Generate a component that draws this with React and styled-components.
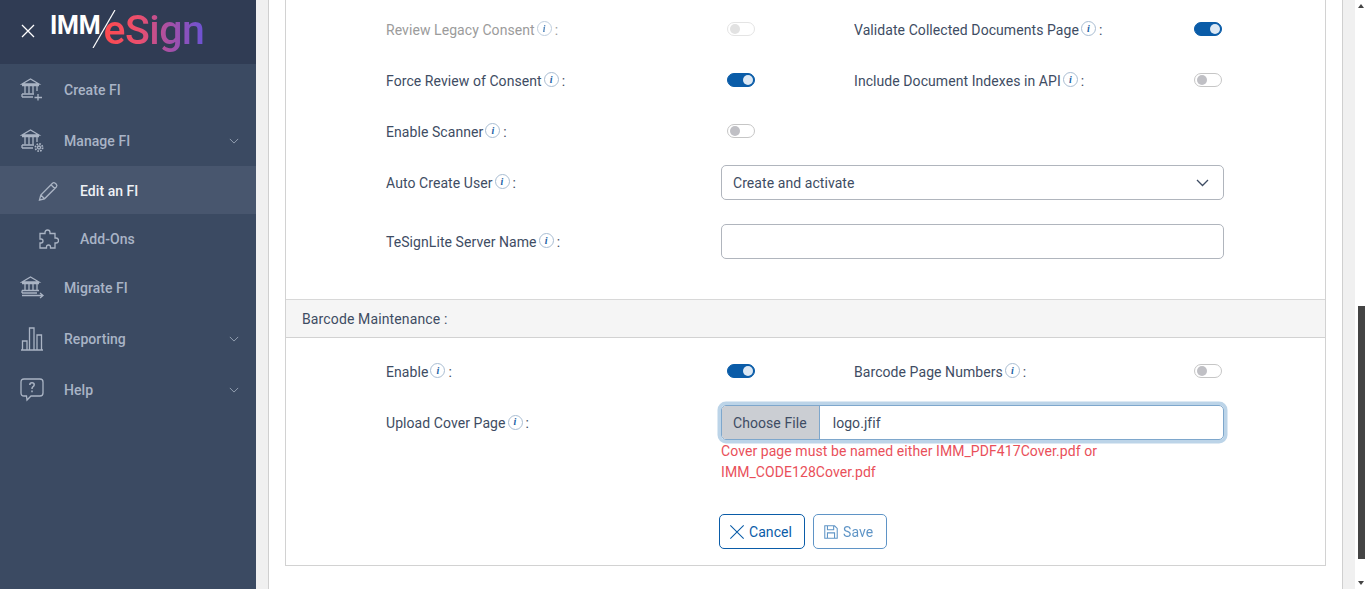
import React from "react";
import styled, { createGlobalStyle } from "styled-components";

const GlobalStyle = createGlobalStyle`
  html, body {
    margin: 0;
    padding: 0;
    overflow: hidden;
    background: #fff;
    font-family: "Roboto", "Liberation Sans", sans-serif;
  }
  * {
    box-sizing: border-box;
  }
`;

const Page = styled.div`
  display: flex;
  width: 1366px;
  height: 589px;
  overflow: hidden;
`;

/* sidebar */
const Sidebar = styled.aside`
  flex: 0 0 256px;
  background: #3b4a62;
`;

const SideHeader = styled.div`
  display: flex;
  height: 64px;
  padding-left: 21px;
  background: #303c54;
`;

const CloseBtn = styled.svg`
  width: 14px;
  height: 14px;
  margin: 24px 15px 0 0;
  stroke: #fff;
  stroke-width: 1.3;
`;

const Logo = styled.div`
  position: relative;
  display: flex;
  width: 160px;
  height: 64px;
`;

const LogoImm = styled.span`
  margin-top: 11px;
  font-family: "Roboto", sans-serif;
  font-size: 25px;
  line-height: 30px;
  font-weight: 700;
  letter-spacing: -0.2px;
  color: #fff;
`;

const LogoSlash = styled.svg`
  position: absolute;
  left: 42px;
  top: 10px;
  width: 24px;
  height: 38px;
  stroke: #fff;
  stroke-width: 1.2;
`;

const LogoSign = styled.span`
  margin: 5px 0 0 3px;
  height: 54px;
  font-family: "Roboto", sans-serif;
  font-size: 41px;
  line-height: 50px;
  font-weight: 500;
  letter-spacing: -0.5px;
  background: linear-gradient(90deg, #ff4a4e 0%, #ea4f6e 35%, #a650a6 65%, #6c53d4 100%);
  -webkit-background-clip: text;
  background-clip: text;
  color: transparent;
`;

const MenuItem = styled.div`
  display: flex;
  align-items: center;
  height: ${(p) => p.$h || 51}px;
  padding: ${(p) => (p.$sub ? "1px 0 0 37px" : "0 17px 0 20px")};
  background: ${(p) => (p.$active ? "#48566e" : "transparent")};
`;

const MenuIcon = styled.svg`
  flex: none;
  width: ${(p) => (p.$sub ? 22 : 26)}px;
  height: ${(p) => (p.$sub ? 22 : 26)}px;
  margin-right: ${(p) => (p.$sub ? 21 : 18)}px;
  fill: none;
  stroke: #aab4c4;
  stroke-width: 1.3;
`;

const MenuText = styled.span`
  flex: 1;
  font-size: 14px;
  font-weight: 500;
  letter-spacing: 0.05px;
  color: ${(p) => (p.$active ? "#eef1f5" : "#a9b4c6")};
`;

const Chevron = styled.svg`
  width: 10px;
  height: 6px;
  fill: none;
  stroke: #a3aebf;
  stroke-width: 1;
`;

/* main column */
const Gutter = styled.div`
  flex: 0 0 12px;
  background: #f0f0f0;
`;

const Content = styled.main`
  flex: 0 0 1075px;
  padding: 0 16px;
  background: #fff;
  border-left: 1px solid #cfcfcf;
  border-right: 1px solid #cfcfcf;
  letter-spacing: 0.07px;
`;

const Panel = styled.section`
  height: 566px;
  border: 1px solid #d2d2d2;
  border-top: 0;
`;

const FormBody = styled.div`
  padding: ${(p) => (p.$top ? "4px 0 40px 100px" : "8px 0 0 100px")};
`;

const ToggleRow = styled.div`
  display: grid;
  grid-template-columns: 335px 34px 99px 340px 28px;
  align-items: center;
  height: 51px;
`;

const FieldRow = styled.div`
  display: grid;
  grid-template-columns: 335px 503px;
  align-items: ${(p) => (p.$start ? "start" : "center")};
  margin-top: ${(p) => p.$mt || 0}px;
`;

const Label = styled.div`
  display: flex;
  align-items: center;
  padding-top: ${(p) => p.$pt || 0}px;
  font-size: 14px;
  line-height: 20px;
  color: ${(p) => (p.$disabled ? "#9b9b9b" : "#3e4c63")};
`;

const InfoDot = styled.span`
  display: inline-flex;
  align-items: center;
  justify-content: center;
  width: 15px;
  height: 15px;
  margin: -2px 3px 0 2px;
  border: 1px solid #a9bdd2;
  border-radius: 50%;
  font-family: "Liberation Serif", serif;
  font-style: italic;
  font-weight: 700;
  font-size: 10px;
  line-height: 1;
  color: #1c5fa5;
  opacity: ${(p) => (p.$disabled ? 0.75 : 1)};
`;

const Toggle = styled.span`
  display: flex;
  align-items: center;
  justify-content: ${(p) => (p.$on ? "flex-end" : "flex-start")};
  justify-self: end;
  width: 28px;
  height: 14px;
  margin-bottom: 2px;
  padding: 0 1.5px;
  border-radius: 7px;
  border: 1px solid ${(p) => (p.$on ? "#0a5ca8" : p.$disabled ? "#e4e4e4" : "#c6c6c6")};
  background: ${(p) => (p.$on ? "#0a5ca8" : "#fff")};

  &::after {
    content: "";
    width: 10px;
    height: 10px;
    border-radius: 50%;
    background: ${(p) => (p.$on ? "#dce8f4" : p.$disabled ? "#e2e2e2" : "#c0c0c5")};
  }
`;

const SelectBox = styled.div`
  display: flex;
  align-items: center;
  justify-content: space-between;
  height: 35px;
  padding: 0 14px 0 11px;
  border: 1px solid #b0b5bd;
  border-radius: 5px;
  font-size: 14px;
  color: #3e4c63;
`;

const SelectChevron = styled.svg`
  width: 13px;
  height: 8px;
  fill: none;
  stroke: #3e4c63;
  stroke-width: 1.3;
`;

const TextBox = styled.div`
  height: 35px;
  border: 1px solid #b0b5bd;
  border-radius: 5px;
`;

const SectionHead = styled.div`
  display: flex;
  align-items: center;
  height: 39px;
  padding-left: 16px;
  background: #f5f5f5;
  border-top: 1px solid #d8d8d8;
  border-bottom: 1px solid #d2d2d2;
  font-size: 14px;
  letter-spacing: 0.13px;
  color: #3e4c63;
`;

const FileBox = styled.div`
  display: flex;
  height: 35px;
  border: 1px solid #7ea7cc;
  border-radius: 5px;
  overflow: hidden;
  box-shadow: 0 0 0 3.5px #bcd4e8;
  font-size: 14px;
  color: #3e4c63;
`;

const FileBtn = styled.span`
  display: flex;
  align-items: center;
  padding: 0 12px 0 11px;
  background: #cbced3;
  border-right: 1px solid #7ea7cc;
`;

const FileName = styled.span`
  display: flex;
  align-items: center;
  padding-left: 13px;
`;

const ErrorText = styled.div`
  margin-top: 1px;
  font-size: 14px;
  line-height: 21px;
  color: #e9505a;
`;

const Buttons = styled.div`
  display: flex;
  gap: 8px;
  margin: 31px 0 0 -2px;
`;

const Btn = styled.span`
  display: flex;
  align-items: center;
  gap: 4px;
  height: 35px;
  padding: 0 ${(p) => (p.$faded ? 13 : 12)}px 0 9px;
  border: 1px solid #0a5ca8;
  border-radius: 5px;
  font-size: 14px;
  color: #0a5ca8;
  opacity: ${(p) => (p.$faded ? 0.65 : 1)};
`;

const BtnIcon = styled.svg`
  width: 16px;
  height: 16px;
  fill: none;
  stroke: #0a5ca8;
  stroke-width: 1.2;
`;

/* window scrollbar */
const Track = styled.div`
  flex: 0 0 12px;
  background: #f0f0f0;
`;

const Scrollbar = styled.div`
  display: flex;
  flex: 0 0 11px;
  flex-direction: column;
  align-items: center;
  height: 589px;
  padding: 4px 0 0 1px;
  background: #fff;
`;

const Arrow = styled.span`
  width: 0;
  height: 0;
  border-left: 3.5px solid transparent;
  border-right: 3.5px solid transparent;
  ${(p) => (p.$down ? "border-top: 4px solid #444;" : "border-bottom: 4px solid #444;")}
  margin-top: ${(p) => p.$mt || 0}px;
`;

const Thumb = styled.span`
  width: 7px;
  height: 253px;
  margin-top: 298px;
  background: #444;
`;

const bank = (
  <>
    <path d="M2 7 L10.5 2 L19 7 Z M2 8.5 H19" />
    <path d="M5 9 V16.5 M9 9 V16.5 M13 9 V16.5 M17 9 V14" />
    <path d="M2 17 H14 M2 20 H13 M2 17 V20" />
  </>
);

const icons = {
  create: (
    <>
      {bank}
      <path d="M18 17 V23.5 M14.5 20.5 H22" />
    </>
  ),
  manage: (
    <>
      {bank}
      <circle cx="19" cy="19.5" r="1.5" />
      <circle cx="19" cy="19.5" r="3.6" strokeWidth="1.8" strokeDasharray="1.6 1.2" />
    </>
  ),
  migrate: (
    <>
      <path d="M2 7 L10.5 2 L19 7 Z M2 8.5 H19" />
      <path d="M5 9 V15 M9 9 V15 M13 9 V15 M17 9 V15" />
      <path d="M2 15.5 H19 M2 18 H17 M2 15.5 V18" />
      <path d="M2 20.5 H23 M20 18 L23 20.5 L20 23" />
    </>
  ),
  reporting: <path d="M1 24 H23 M2.5 24 V15 H7 V24 M9.5 24 V2 H14 V24 M17 24 V9 H21.5 V24" />,
  help: (
    <>
      <path d="M4 2 H20 Q23 2 23 5 V16 Q23 19 20 19 H11 L7 23 L6.5 19 H4 Q1 19 1 16 V5 Q1 2 4 2 Z" />
      <path d="M9.8 8 Q9.8 5.8 12 5.8 Q14.2 5.8 14.2 7.8 Q14.2 9 12.8 9.8 Q12 10.3 12 12" strokeWidth="1.5" />
      <path d="M12 13.5 V15.2" strokeWidth="1.5" />
    </>
  ),
  edit: (
    <path d="M2.5 20 L3.8 15 L15.5 3.2 Q16.8 2 18.2 3.2 L19.3 4.3 Q20.5 5.6 19.3 7 L7.5 18.8 Z M3.8 15 L7.5 18.8 M14 4.8 L17.8 8.5" />
  ),
  addons: (
    <path d="M8 4.5 Q8 2 10.5 2 Q13 2 13 4.5 V5.5 H18 V10 H19 Q21.5 10 21.5 12.5 Q21.5 15 19 15 H18 V20 H13.5 V19 Q13.5 17 11.5 17 Q9.5 17 9.5 19 V20 H3 V15 H4 Q6 15 6 13 Q6 11 4 11 H3 V5.5 H8 Z" />
  ),
};

const menu = [
  { label: "Create FI", icon: "create" },
  { label: "Manage FI", icon: "manage", more: true },
  { label: "Edit an FI", icon: "edit", sub: true, active: true, h: 48 },
  { label: "Add-Ons", icon: "addons", sub: true, h: 48 },
  { label: "Migrate FI", icon: "migrate" },
  { label: "Reporting", icon: "reporting", more: true },
  { label: "Help", icon: "help", more: true },
];

function FieldLabel({ text, disabled, pt }) {
  return (
    <Label $disabled={disabled} $pt={pt}>
      {text}
      <InfoDot $disabled={disabled}>i</InfoDot>:
    </Label>
  );
}

function App() {
  return (
    <Page>
      <GlobalStyle />
      <Sidebar>
        <SideHeader>
          <CloseBtn viewBox="0 0 14 14">
            <path d="M1 1 L13 13 M13 1 L1 13" />
          </CloseBtn>
          <Logo>
            <LogoImm>IMM</LogoImm>
            <LogoSlash viewBox="0 0 24 38">
              <path d="M23 0 L1 38" />
            </LogoSlash>
            <LogoSign>eSign</LogoSign>
          </Logo>
        </SideHeader>
        {menu.map((item) => (
          <MenuItem key={item.label} $sub={item.sub} $active={item.active} $h={item.h}>
            <MenuIcon viewBox={item.sub ? "0 0 22 22" : "0 0 26 26"} $sub={item.sub}>
              {icons[item.icon]}
            </MenuIcon>
            <MenuText $active={item.active}>{item.label}</MenuText>
            {item.more && (
              <Chevron viewBox="0 0 12 7">
                <path d="M1 1 L6 6 L11 1" />
              </Chevron>
            )}
          </MenuItem>
        ))}
      </Sidebar>
      <Gutter />
      <Content>
        <Panel>
          <FormBody $top>
            <ToggleRow>
              <FieldLabel text="Review Legacy Consent" disabled />
              <Toggle $disabled />
              <span />
              <FieldLabel text="Validate Collected Documents Page" />
              <Toggle $on />
            </ToggleRow>
            <ToggleRow>
              <FieldLabel text="Force Review of Consent" />
              <Toggle $on />
              <span />
              <FieldLabel text="Include Document Indexes in API" />
              <Toggle />
            </ToggleRow>
            <ToggleRow>
              <FieldLabel text="Enable Scanner" />
              <Toggle />
            </ToggleRow>
            <FieldRow $mt={8}>
              <FieldLabel text="Auto Create User" />
              <SelectBox>
                Create and activate
                <SelectChevron viewBox="0 0 13 8">
                  <path d="M1 1 L6.5 6.5 L12 1" />
                </SelectChevron>
              </SelectBox>
            </FieldRow>
            <FieldRow $mt={24}>
              <FieldLabel text="TeSignLite Server Name" />
              <TextBox />
            </FieldRow>
          </FormBody>
          <SectionHead>Barcode Maintenance :</SectionHead>
          <FormBody>
            <ToggleRow>
              <FieldLabel text="Enable" />
              <Toggle $on />
              <span />
              <FieldLabel text="Barcode Page Numbers" />
              <Toggle />
            </ToggleRow>
            <FieldRow $start $mt={8}>
              <FieldLabel text="Upload Cover Page" pt={8} />
              <div>
                <FileBox>
                  <FileBtn>Choose File</FileBtn>
                  <FileName>logo.jfif</FileName>
                </FileBox>
                <ErrorText>
                  Cover page must be named either IMM_PDF417Cover.pdf or
                  <br />
                  IMM_CODE128Cover.pdf
                </ErrorText>
                <Buttons>
                  <Btn>
                    <BtnIcon viewBox="0 0 18 18">
                      <path d="M1.5 1.5 L16.5 16.5 M16.5 1.5 L1.5 16.5" />
                    </BtnIcon>
                    Cancel
                  </Btn>
                  <Btn $faded>
                    <BtnIcon viewBox="0 0 18 18">
                      <path d="M2 2 H13 L16 5 V16 H2 Z M5 2 V6.5 H12 V2 M5 16 V10 H13 V16" />
                    </BtnIcon>
                    Save
                  </Btn>
                </Buttons>
              </div>
            </FieldRow>
          </FormBody>
        </Panel>
      </Content>
      <Track />
      <Scrollbar>
        <Arrow />
        <Thumb />
        <Arrow $down $mt={22} />
      </Scrollbar>
    </Page>
  );
}

export default App;
